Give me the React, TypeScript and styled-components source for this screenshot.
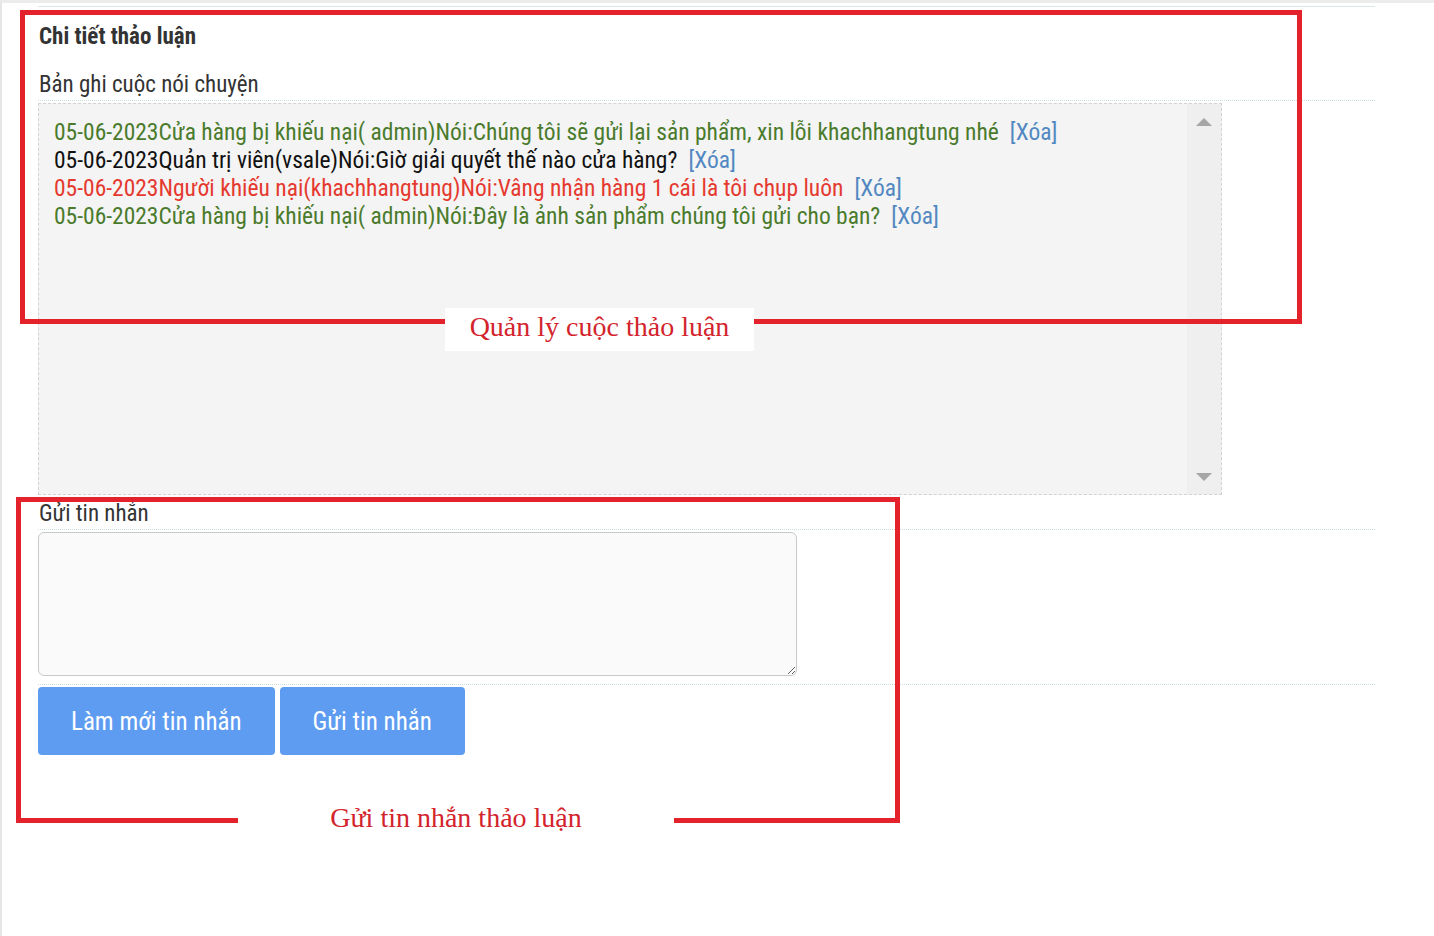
import React from "react";
import styled, { createGlobalStyle } from "styled-components";

const GlobalStyle = createGlobalStyle`
  html, body { margin: 0; padding: 0; background: #ffffff; }
  body { font-family: Roboto, "Noto Sans", "Liberation Sans", sans-serif; color: #333; }
  * { box-sizing: border-box; }
`;

const Page = styled.div`
  position: relative;
  min-height: 100vh;
  border-left: 2px solid #e6e6e6;
  border-top: 3px solid #ececec;
  background: #fff;
`;

const Content = styled.div`
  margin-left: 36px;
  width: 1337px;
  padding-top: 3px;
  font-stretch: condensed;
`;

const TopRule = styled.div`
  border-top: 1px solid #dde7ea;
`;

const Title = styled.h3`
  margin: 17px 0 0 1px;
  font-size: 23px;
  line-height: 26px;
  font-weight: 700;
  color: #333;
`;

const FieldLabel = styled.div<{ $top: number }>`
  margin-top: ${(p) => p.$top}px;
  padding: 0 0 2px 1px;
  font-size: 23px;
  line-height: 26px;
  color: #333;
  border-bottom: 1px dotted #cfdfe1;
`;

const ChatBox = styled.div`
  margin-top: 2px;
  width: 1184px;
  height: 392px;
  border: 1px dashed #d3d3d3;
  background: #f4f4f4;
  display: grid;
  grid-template-columns: 1fr 34px;
`;

const MessageList = styled.div`
  padding: 14px 0 0 15px;
  font-size: 23.5px;
  line-height: 28px;
`;

const Message = styled.div<{ $color: string }>`
  color: ${(p) => p.$color};
  white-space: nowrap;
`;

const DeleteLink = styled.a`
  margin-left: 11px;
  color: #5288c1;
  text-decoration: none;
  cursor: pointer;
`;

const ScrollTrack = styled.div`
  background: #efefef;
  display: flex;
  flex-direction: column;
  justify-content: space-between;
  align-items: center;
  padding: 14px 0 13px;
`;

const Arrow = styled.span<{ $down?: boolean }>`
  width: 0;
  height: 0;
  border-left: 8px solid transparent;
  border-right: 8px solid transparent;
  ${(p) =>
    p.$down
      ? "border-top: 8px solid #a6a6a6;"
      : "border-bottom: 8px solid #a6a6a6;"}
`;

const MessageInput = styled.textarea`
  display: block;
  margin-top: 2px;
  width: 759px;
  height: 144px;
  border: 1px solid #c9c9c9;
  border-radius: 6px;
  background: #fafafa;
  font-family: inherit;
  font-size: 18px;
  padding: 6px 10px;
  outline: none;
`;

const Separator = styled.div`
  margin-top: 8px;
  border-top: 1px dotted #cfdfe1;
`;

const ButtonRow = styled.div`
  margin-top: 2px;
  display: flex;
  gap: 5px;
`;

const ActionButton = styled.button`
  height: 68px;
  padding: 0 33px;
  border: none;
  border-radius: 4px;
  background: #5e9cf1;
  color: #fff;
  font-family: inherit;
  font-stretch: condensed;
  font-size: 25px;
  cursor: pointer;
`;

const AnnotationBox = styled.div<{
  $left: number;
  $top: number;
  $width: number;
  $height: number;
}>`
  position: absolute;
  left: ${(p) => p.$left}px;
  top: ${(p) => p.$top}px;
  width: ${(p) => p.$width}px;
  height: ${(p) => p.$height}px;
  border: 5px solid #e3222b;
  pointer-events: none;
`;

const AnnotationLabel = styled.div<{
  $left: number;
  $top: number;
  $width: number;
  $height: number;
  $lift: number;
}>`
  position: absolute;
  left: ${(p) => p.$left}px;
  top: ${(p) => p.$top}px;
  width: ${(p) => p.$width}px;
  height: ${(p) => p.$height}px;
  padding-bottom: ${(p) => p.$lift}px;
  background: #fff;
  display: flex;
  align-items: center;
  justify-content: center;
  font-family: "Liberation Serif", "Times New Roman", serif;
  font-size: 28px;
  color: #d3232c;
  white-space: nowrap;
`;

const messages = [
  {
    color: "#4a7b2c",
    text: "05-06-2023Cửa hàng bị khiếu nại( admin)Nói:Chúng tôi sẽ gửi lại sản phẩm, xin lỗi khachhangtung nhé",
  },
  {
    color: "#111111",
    text: "05-06-2023Quản trị viên(vsale)Nói:Giờ giải quyết thế nào cửa hàng?",
  },
  {
    color: "#e5392f",
    text: "05-06-2023Người khiếu nại(khachhangtung)Nói:Vâng nhận hàng 1 cái là tôi chụp luôn",
  },
  {
    color: "#4a7b2c",
    text: "05-06-2023Cửa hàng bị khiếu nại( admin)Nói:Đây là ảnh sản phẩm chúng tôi gửi cho bạn?",
  },
];

export default function App() {
  return (
    <>
      <GlobalStyle />
      <Page>
        <Content>
          <TopRule />
          <Title>Chi tiết thảo luận</Title>
          <FieldLabel $top={22}>Bản ghi cuộc nói chuyện</FieldLabel>
          <ChatBox>
            <MessageList>
              {messages.map((m, i) => (
                <Message key={i} $color={m.color}>
                  {m.text}
                  <DeleteLink>[Xóa]</DeleteLink>
                </Message>
              ))}
            </MessageList>
            <ScrollTrack>
              <Arrow />
              <Arrow $down />
            </ScrollTrack>
          </ChatBox>
          <FieldLabel $top={6}>Gửi tin nhắn</FieldLabel>
          <MessageInput />
          <Separator />
          <ButtonRow>
            <ActionButton>Làm mới tin nhắn</ActionButton>
            <ActionButton>Gửi tin nhắn</ActionButton>
          </ButtonRow>
        </Content>

        <AnnotationBox $left={18} $top={7} $width={1282} $height={314}>
          <AnnotationLabel $left={420} $top={293} $width={309} $height={43} $lift={6}>
            Quản lý cuộc thảo luận
          </AnnotationLabel>
        </AnnotationBox>
        <AnnotationBox $left={14} $top={494} $width={884} $height={326}>
          <AnnotationLabel $left={217} $top={297} $width={436} $height={40} $lift={2}>
            Gửi tin nhắn thảo luận
          </AnnotationLabel>
        </AnnotationBox>
      </Page>
    </>
  );
}
